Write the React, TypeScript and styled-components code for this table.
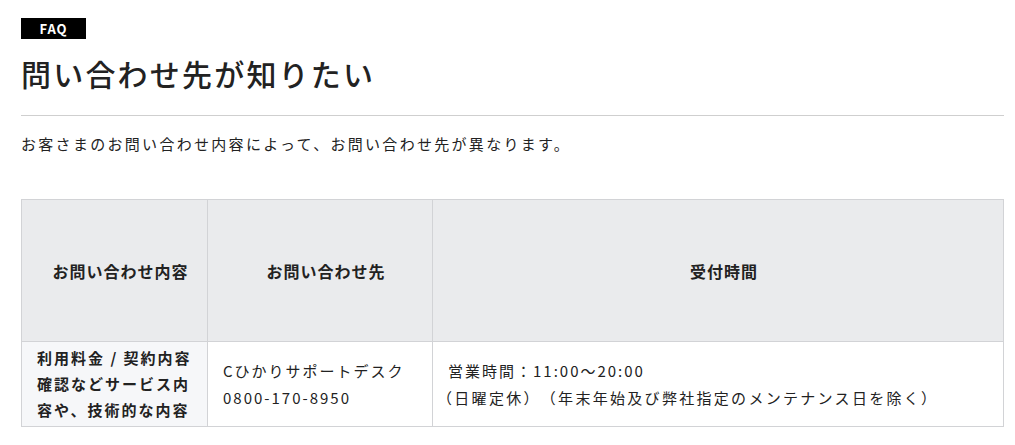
import React from 'react';
import styled, { createGlobalStyle } from 'styled-components';

const GlobalStyle = createGlobalStyle`
  body {
    margin: 0;
    background: #fff;
    color: #222;
    font-family: "Noto Sans CJK JP", "Noto Sans", sans-serif;
    text-spacing-trim: space-all;
  }
`;

interface IRow {
  subject: string;
  desk: string[];
  hours: string[];
}

const rows: IRow[] = [
  {
    subject: '利用料金 / 契約内容確認などサービス内容や、技術的な内容',
    desk: ['Cひかりサポートデスク', '0800-170-8950'],
    hours: ['営業時間：11:00〜20:00', '（日曜定休）（年末年始及び弊社指定のメンテナンス日を除く）'],
  },
];

const App: React.FC = () => {
  return (
    <>
      <GlobalStyle />
      <Section>
        <Badge>FAQ</Badge>
        <Title>問い合わせ先が知りたい</Title>
        <Lead>お客さまのお問い合わせ内容によって、お問い合わせ先が異なります。</Lead>
        <Table>
          <colgroup>
            <col style={{ width: 186 }} />
            <col style={{ width: 225 }} />
            <col />
          </colgroup>
          <thead>
            <tr>
              <HeadCell>お問い合わせ内容</HeadCell>
              <HeadCell>お問い合わせ先</HeadCell>
              <HeadCell>受付時間</HeadCell>
            </tr>
          </thead>
          <tbody>
            {rows.map((row, i) => (
              <tr key={i}>
                <SubjectCell>{row.subject}</SubjectCell>
                <BodyCell>
                  {row.desk.map((line) => (
                    <Line key={line}>{line}</Line>
                  ))}
                </BodyCell>
                <BodyCell>
                  {row.hours.map((line) => (
                    <Line key={line} $indent={line.startsWith('（')}>
                      {line}
                    </Line>
                  ))}
                </BodyCell>
              </tr>
            ))}
          </tbody>
        </Table>
      </Section>
    </>
  );
};

export default App;

const Section = styled.section`
  padding: 18px 11px 0 21px;
`;

const Badge = styled.div`
  width: 65px;
  height: 21px;
  display: flex;
  align-items: center;
  justify-content: center;
  background: #000;
  color: #fff;
  font-size: 13px;
  font-weight: 700;
  letter-spacing: 1px;
`;

const Title = styled.h1`
  margin: 12px 0 0;
  padding-bottom: 20px;
  border-bottom: 1px solid #cfcfcf;
  font-size: 30px;
  line-height: 44px;
  font-weight: 500;
  letter-spacing: 2.2px;
  color: #222;
`;

const Lead = styled.p`
  margin: 15px 0 42px;
  font-size: 15px;
  line-height: 26px;
  letter-spacing: 2.3px;
  color: #222;
`;

const Table = styled.table`
  width: 100%;
  border-collapse: collapse;
  table-layout: fixed;
  border: 1px solid #d2d3d6;
  font-size: 15px;
  letter-spacing: 2px;
`;

const HeadCell = styled.th`
  height: 141px;
  padding: 0 10px 0 22px;
  background: #eaebed;
  border: 1px solid #d2d3d6;
  font-size: 16px;
  letter-spacing: 1px;
  font-weight: 700;
  text-align: center;
  vertical-align: middle;
`;

const SubjectCell = styled.td`
  padding: 3px 15px;
  background: #f6f7f9;
  border: 1px solid #d2d3d6;
  font-weight: 700;
  line-height: 26px;
  vertical-align: middle;
`;

const BodyCell = styled.td`
  padding: 3px 15px;
  background: #fff;
  border: 1px solid #d2d3d6;
  line-height: 27px;
  vertical-align: middle;
`;

const Line = styled.div<{ $indent?: boolean }>`
  margin-left: ${({ $indent }) => ($indent ? '-11px' : '0')};
  letter-spacing: ${({ $indent }) => ($indent ? '2.3px' : 'inherit')};
`;
